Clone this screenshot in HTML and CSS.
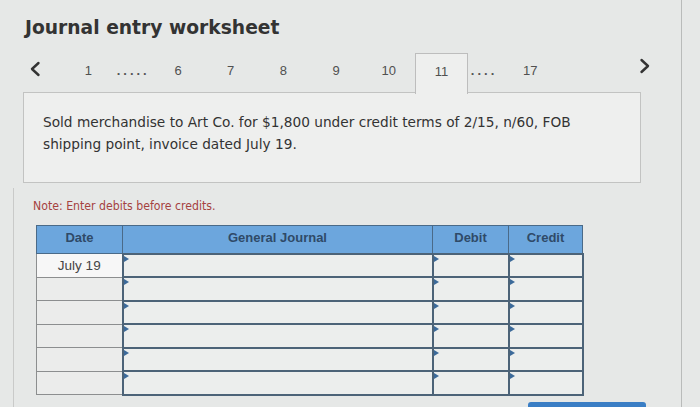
FILE: index.html
```html
<!DOCTYPE html>
<html>
<head>
<meta charset="utf-8">
<link rel="stylesheet" href="styles.css">
</head>
<body>
<div class="wrap">
  <h1 class="title">Journal entry worksheet</h1>
  <div class="pager">
    <span class="nav prev"><svg width="12" height="16" viewBox="0 0 12 16"><path d="M9.5 2 L3 8 L9.5 14" fill="none" stroke="#333" stroke-width="2.4" stroke-linecap="round" stroke-linejoin="round"/></svg></span>
    <span class="pg">1</span>
    <span class="dots d5">.....</span>
    <span class="pg">6</span>
    <span class="pg">7</span>
    <span class="pg">8</span>
    <span class="pg">9</span>
    <span class="pg">10</span>
    <span class="pg active">11</span>
    <span class="dots d4">....</span>
    <span class="pg">17</span>
    <span class="nav next"><svg width="12" height="16" viewBox="0 0 12 16"><path d="M2.5 2 L9 8 L2.5 14" fill="none" stroke="#333" stroke-width="2.4" stroke-linecap="round" stroke-linejoin="round"/></svg></span>
  </div>
  <div class="desc">
    <p>Sold merchandise to Art Co. for $1,800 under credit terms of 2/15, n/60, FOB shipping point, invoice dated July 19.</p>
  </div>
  <div class="lower">
    <p class="note">Note: Enter debits before credits.</p>
    <table class="journal">
      <thead>
        <tr>
          <th class="c-date">Date</th>
          <th class="c-gj">General Journal</th>
          <th class="c-dr">Debit</th>
          <th class="c-cr">Credit</th>
        </tr>
      </thead>
      <tbody>
        <tr><td class="date first">July 19</td><td class="in"></td><td class="in"></td><td class="in"></td></tr>
        <tr><td class="date"></td><td class="in"></td><td class="in"></td><td class="in"></td></tr>
        <tr><td class="date"></td><td class="in"></td><td class="in"></td><td class="in"></td></tr>
        <tr><td class="date"></td><td class="in"></td><td class="in"></td><td class="in"></td></tr>
        <tr><td class="date"></td><td class="in"></td><td class="in"></td><td class="in"></td></tr>
        <tr><td class="date"></td><td class="in"></td><td class="in"></td><td class="in"></td></tr>
      </tbody>
    </table>
    <div class="btnbar"></div>
  </div>
</div>
</body>
</html>
```
FILE: styles.css
```css
html, body {
  margin: 0;
  padding: 0;
  background: #e6e8e7;
  overflow: hidden;
}
.wrap {
  width: 682px;
  height: 407px;
  box-sizing: border-box;
  border-right: 1px solid #b9bbba;
  display: flex;
  flex-direction: column;
  overflow: hidden;
}
.wrap > * { flex-shrink: 0; }
.title {
  margin: 0;
  padding: 16px 0 0 25px;
  font-family: "DejaVu Sans", Verdana, sans-serif;
  font-weight: bold;
  font-size: 18.7px;
  line-height: 24px;
  color: #333;
}
.pager {
  display: flex;
  align-items: stretch;
  margin: 13px 0 0 23px;
  height: 40px;
  width: 637px;
  font-family: "Liberation Sans", Arial, sans-serif;
  font-size: 13px;
  color: #505050;
  position: relative;
  z-index: 1;
}
.pager span {
  display: flex;
  align-items: center;
  justify-content: center;
  padding-bottom: 5px;
  box-sizing: border-box;
}
.nav svg { display: block; }
.pager .nav { padding-bottom: 9px; }
.pager .prev {
  width: 39px;
  justify-content: flex-start;
  padding-left: 6px;
}
.pager .next {
  margin-left: auto;
  width: 30px;
  padding-bottom: 14px;
}
.pg { width: 52.7px; }
.dots { font-weight: bold; letter-spacing: 3px; color: #555; }
.d5 { width: 37px; }
.pager .d4 { width: 36px; justify-content: flex-start; padding-left: 3px; }
.active {
  background: #eeefee;
  border: 1px solid #bdbdbd;
  border-bottom: none;
  height: 41px;
}
.desc {
  margin: -1px 0 0 23px;
  width: 618px;
  height: 91px;
  box-sizing: border-box;
  border: 1px solid #c2c3c2;
  background: #eeefee;
  padding: 18px 0 0 19px;
}
.desc p {
  margin: 0;
  font-family: "DejaVu Sans", Verdana, sans-serif;
  font-size: 13.7px;
  line-height: 22px;
  color: #333;
  width: 565px;
}
.lower {
  margin: 5px 0 0 13px;
  border-left: 1px solid #c9cac9;
  flex: 1 0 auto;
  padding-left: 19px;
}
.note {
  margin: 11px 0 0 0;
  font-family: "DejaVu Sans Condensed", "DejaVu Sans", sans-serif;
  font-size: 12.2px;
  line-height: 15px;
  color: #a5423f;
}
.journal {
  margin: 11px 0 0 3px;
  border-collapse: collapse;
  table-layout: fixed;
  width: 546px;
  font-family: "Liberation Sans", Arial, sans-serif;
}
.journal th {
  background: #6ca6dd;
  color: #2f4a68;
  font-size: 13px;
  font-weight: bold;
  height: 28px;
  padding: 0 0 4px 0;
  border: 1px solid #4a6a88;
  box-sizing: border-box;
}
.c-date { width: 86px; }
.c-gj { width: 310px; }
.c-dr { width: 76px; }
.c-cr { width: 74px; }
.journal td {
  height: 23.5px;
  padding: 0;
  box-sizing: border-box;
}
.date {
  background: #ebeceb;
  border: 1px solid #8c8e8f;
  text-align: center;
  font-size: 13.5px;
  color: #454545;
}
.date.first { background: #f7f7f7; }
.in {
  background: #eceeed;
  border: 2px solid #4c6378;
  position: relative;
}
.in::before {
  content: "";
  position: absolute;
  left: 0;
  top: 1px;
  border-top: 3px solid transparent;
  border-bottom: 3px solid transparent;
  border-left: 5px solid #3c6a9a;
}
.btnbar {
  margin: 6px 0 0 495px;
  width: 118px;
  height: 6px;
  background: #3a7ec5;
  border-radius: 3px 3px 0 0;
}
```
